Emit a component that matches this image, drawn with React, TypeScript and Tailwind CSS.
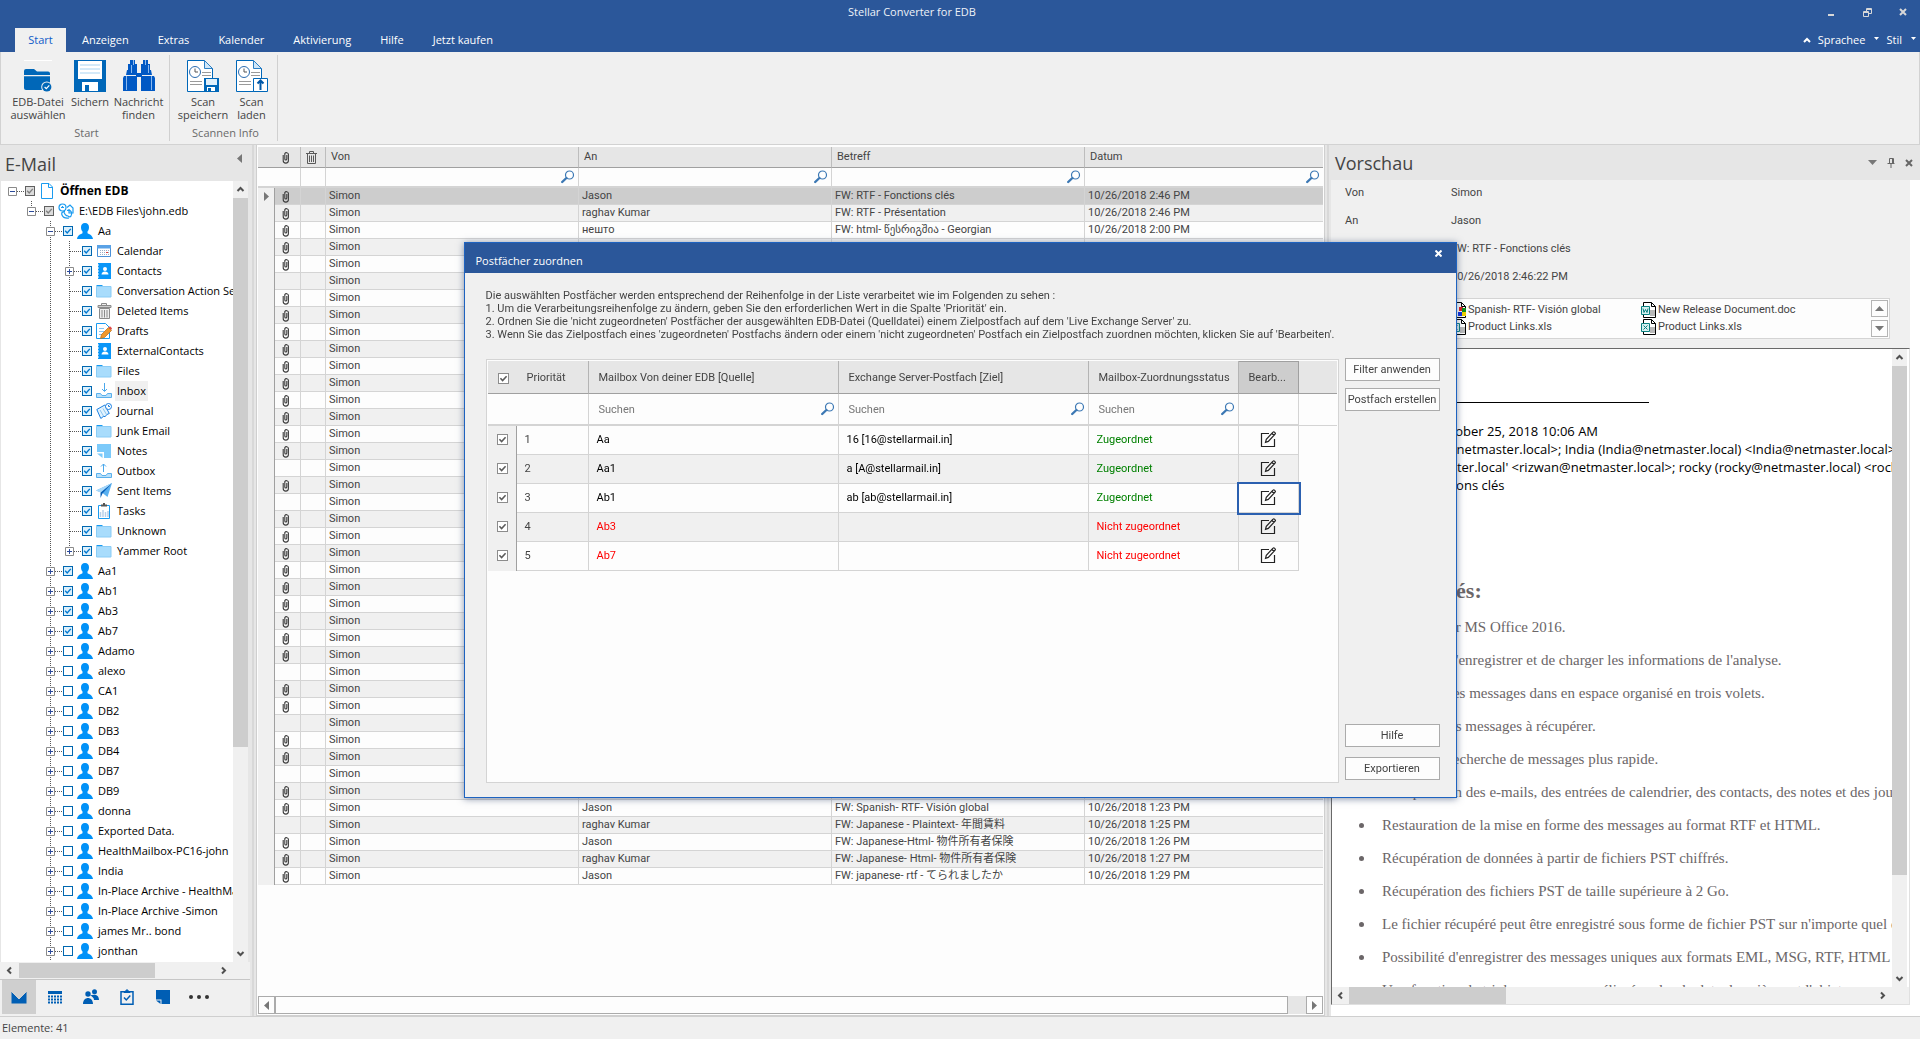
import React from "react";

const UI = "font-['Open_Sans','Noto_Sans',sans-serif]";
const GRID = "font-[Roboto,'DejaVu_Sans','Noto_Sans_CJK_JP',sans-serif]";

/* ---------- small shared pieces ---------- */

function Magnifier() {
  return (
    <svg width="14" height="14" viewBox="0 0 14 14" aria-hidden="true">
      <circle cx="8.5" cy="5" r="4" fill="#fff" stroke="#3c78b4" strokeWidth="1.2" />
      <path d="M5.4 8 1.2 12" stroke="#3c78b4" strokeWidth="2.4" strokeLinecap="round" />
    </svg>
  );
}

function Clip() {
  return (
    <svg className="block" width="8" height="13" viewBox="0 0 8 13" fill="none" stroke="#3c3c3c" strokeWidth="1.1" aria-hidden="true">
      <path d="M1.2 4v5.500a2.600 2.600 0 0 0 5.200 0V3.200A2 2 0 0 0 2.800 2.500V8a1 1 0 0 0 2 0V4" />
    </svg>
  );
}

function TrashSmall() {
  return (
    <svg width="11" height="13" viewBox="0 0 11 13" fill="none" stroke="#5a5a5a" aria-hidden="true">
      <path d="M0 2.5h11M3.5 2V.5h4V2M1.5 3v9.5h8V3M3.5 4.5v6.5M5.5 4.5v6.5M7.5 4.5v6.5" />
    </svg>
  );
}

function Chevron({ dir }: { dir: "up" | "down" | "left" | "right" }) {
  const d = {
    up: "M1.5 6 4.5 3 7.5 6",
    down: "M1.5 3 4.5 6 7.5 3",
    left: "M6 1.5 3 4.5 6 7.5",
    right: "M3 1.5 6 4.5 3 7.5",
  }[dir];
  return (
    <svg width="9" height="9" viewBox="0 0 9 9" fill="none" stroke="#505050" strokeWidth="2" aria-hidden="true">
      <path d={d} />
    </svg>
  );
}

function Triangle({ dir }: { dir: "up" | "down" | "left" | "right" }) {
  const d = { up: "M4.5 2 9 7H0z", down: "M0 2h9L4.5 7z", left: "M2 4.5 7 0v9z", right: "M7 4.5 2 0v9z" }[dir];
  return (
    <svg width="9" height="9" viewBox="0 0 9 9" fill="#777" aria-hidden="true">
      <path d={d} />
    </svg>
  );
}

function Tick({ tone, checked, label }: { tone: "blue" | "grey" | "plain"; checked: boolean; label: string }) {
  const box = {
    blue: checked ? "border-[#0067b0] bg-[#dcf0fc]" : "border-[#0067b0] bg-white",
    grey: "border-[#606060] bg-[#dcdcdc]",
    plain: "border-[#8c8c8c] bg-white",
  }[tone];
  const stroke = { blue: "#0078d0", grey: "#808080", plain: "#5a5a5a" }[tone];
  const size = tone === "plain" ? "size-[11px]" : "size-[10px]";
  return (
    <span className={`relative block shrink-0 ${size}`}>
      <input type="checkbox" defaultChecked={checked} aria-label={label} className={`block size-full appearance-none border ${box}`} />
      {checked && (
        <svg className="pointer-events-none absolute inset-0 size-full" viewBox="0 0 10 10" fill="none" stroke={stroke} strokeWidth="1.4">
          <path d="M2.2 4.8 4.2 6.9 7.8 2.9" />
        </svg>
      )}
    </span>
  );
}

/* ---------- ribbon ---------- */

const FolderBig = () => (
  <svg width="32" height="32" viewBox="0 0 32 32" aria-hidden="true">
    <path d="M2 .5h28" stroke="#fff" />
    <path d="M2 11a2 2 0 0 1 2-2h8l3 2.500h11a2 2 0 0 1 2 2V15H2z" fill="#0067b8" />
    <path d="M2 16.200h26V30H4a2 2 0 0 1-2-2z" fill="#0067b8" />
    <circle cx="24.800" cy="27" r="5.600" fill="#f0f0f0" />
    <circle cx="24.800" cy="27" r="4.600" fill="#0067b8" />
    <path d="m22.600 27 1.700 1.700 3-3.400" stroke="#fff" strokeWidth="1.200" fill="none" />
  </svg>
);
const Floppy = () => (
  <svg width="32" height="32" viewBox="0 0 32 32" aria-hidden="true">
    <path fill="#0067b8" d="M0 0h32v32H0z" />
    <path fill="#fff" d="M4 1h24v18H4z" />
    <path d="M6 5h20M6 9h20M6 13h20" stroke="#a9d4f2" />
    <path fill="#fff" d="M8 22h16v9H8z" />
    <path fill="#0067b8" d="M11 25h4v6h-4z" />
  </svg>
);
const Binoculars = () => (
  <svg width="32" height="32" viewBox="0 0 32 32" aria-hidden="true">
    <g fill="#0058c4">
      <path d="M7 0h5v4h2v9H5V4h2zM20 0h5v4h2v9h-9V4h2z" />
      <path d="M4 10h10v5H3zM18 10h10l1 5H18zM13 13h6v4h-6z" />
      <path d="M1 16h13v15H0V18zM18 16h13l1 2v13H18z" />
    </g>
    <path d="M10.500 0v5M22.500 0v5M8.500 5v8M25.500 5v8M3.500 16v14M28.500 16v14" stroke="#8ab8ee" />
    <path d="M16 0v12M16 18v13" stroke="#f0f0f0" strokeWidth="3" />
  </svg>
);
const ScanDoc = ({ children }: { children: React.ReactNode }) => (
  <svg width="32" height="32" viewBox="0 0 32 32" aria-hidden="true">
    <path d="M.5.5h17l8 8v23H.5z" fill="#fff" stroke="#0067b8" />
    <path d="M17.500.5v8h8z" fill="#cfe6f8" stroke="#2b7fc4" />
    <circle cx="8" cy="12" r="5.500" fill="#fff" stroke="#2b6cb0" />
    <path d="M8 8.500V12h3" fill="none" stroke="#555" />
    <path d="M15 12.500h9M15 15.500h9M3 21.500h12M3 24.500h12" stroke="#9a9a9a" />
    {children}
  </svg>
);
const ScanSave = () => (
  <ScanDoc>
    <path d="M17 18h15v14H17z" fill="#0067b8" />
    <path d="M19 19h11v6H19z" fill="#e0f0fb" />
    <path d="M20 27h8v4h-8z" fill="#fff" />
    <path d="M21 28h3v3h-3z" fill="#0067b8" />
  </ScanDoc>
);
const ScanLoad = () => (
  <ScanDoc>
    <path d="M17.500 18.500h14v13h-14z" fill="#fff" stroke="#0067b8" />
    <path d="M24.500 30v-9M21.500 23.500l3-3 3 3" stroke="#0058a8" strokeWidth="2" fill="none" />
  </ScanDoc>
);

function RibbonButton({ icon, lines, width }: { icon: React.ReactNode; lines: string[]; width: string }) {
  return (
    <button className={`flex flex-col items-center gap-[3px] ${width}`}>
      {icon}
      <span className="h-[26px] whitespace-nowrap text-center text-[11px] leading-[13px] text-[#444]">
        {lines.map((l) => (
          <span key={l} className="block">{l}</span>
        ))}
      </span>
    </button>
  );
}

function Header() {
  const tabs = ["Anzeigen", "Extras", "Kalender", "Aktivierung", "Hilfe", "Jetzt kaufen"];
  return (
    <header className="shrink-0">
      <div className="bg-[#2b579a] text-[11px] text-white">
        <div className="flex h-7 items-center">
          <h1 className="flex-1 pl-3 pb-[3px] text-center text-[#eef2f8]">Stellar Converter for EDB</h1>
          <div className="flex w-[108px] justify-around pb-1 text-[#d8d8d8]">
            <button aria-label="Minimieren">
              <svg width="10" height="10" viewBox="0 0 10 10"><path d="M2 8h6" stroke="currentColor" strokeWidth="2" /></svg>
            </button>
            <button aria-label="Wiederherstellen">
              <svg width="9" height="9" viewBox="0 0 9 9" fill="none" stroke="currentColor"><path d="M.5 3.500h5v5h-5zM.5 4.500h5M3.500 3V.5h5v5H6M3.500 1.500h5" /></svg>
            </button>
            <button aria-label="Schließen">
              <svg width="8" height="8" viewBox="0 0 8 8" stroke="currentColor" strokeWidth="2"><path d="m1 1 6 6M7 1 1 7" /></svg>
            </button>
          </div>
        </div>
        <nav className="flex h-6 pl-[15px]">
          <button className="w-[51px] bg-[#f0f0f0] text-[#0f5cc8]">Start</button>
          {tabs.map((t, i) => (
            <button key={t} className={i === 0 ? "pl-4 pr-[14px]" : "pl-[15px] pr-[14px]"}>{t}</button>
          ))}
          <div className="ml-auto flex items-center gap-[7px] pr-1">
            <svg width="8" height="6" viewBox="0 0 8 6" fill="none" stroke="#fff" strokeWidth="2"><path d="m1 5 3-3 3 3" /></svg>
            <button className="flex gap-[9px]">
              Sprachee
              <svg className="mt-1" width="5" height="4" viewBox="0 0 5 4" fill="#fff"><path d="M0 1h5L2.500 4z" /></svg>
            </button>
            <button className="flex gap-[9px]">
              Stil
              <svg className="mt-1" width="5" height="4" viewBox="0 0 5 4" fill="#fff"><path d="M0 1h5L2.500 4z" /></svg>
            </button>
          </div>
        </nav>
      </div>
      <div className="flex border border-t-0 border-[#d2d2d2] bg-[#f0f0f0] pb-[3px] pt-[3px]">
        <section className="border-r border-[#d0d0d0] pl-[7px] pr-1 pt-[5px]">
          <div className="flex">
            <RibbonButton width="w-[60px]" icon={<FolderBig />} lines={["EDB-Datei", "auswählen"]} />
            <RibbonButton width="w-11" icon={<Floppy />} lines={["Sichern"]} />
            <RibbonButton width="w-[53px]" icon={<Binoculars />} lines={["Nachricht", "finden"]} />
          </div>
          <h2 className="pb-px pt-1 text-center text-[11px] leading-[15px] text-[#6a6a6a]">Start</h2>
        </section>
        <section className="border-r border-[#d0d0d0] pl-[7px] pr-[3px] pt-[5px]">
          <div className="flex">
            <RibbonButton width="w-[52px]" icon={<ScanSave />} lines={["Scan", "speichern"]} />
            <RibbonButton width="w-[45px]" icon={<ScanLoad />} lines={["Scan", "laden"]} />
          </div>
          <h2 className="pb-px pt-1 text-center text-[11px] leading-[15px] text-[#6a6a6a]">Scannen Info</h2>
        </section>
      </div>
    </header>
  );
}

/* ---------- folder tree ---------- */

type IconName = "file" | "db" | "user" | "calendar" | "contacts" | "folder" | "trash" | "draft" | "inbox" | "journal" | "notes" | "outbox" | "sent" | "tasks";

const treeIcons: Record<IconName, React.ReactNode> = {
  file: <path d="M2.500.5h7.500l3.500 3.500v11.500h-11zM9.500.5v4h4" fill="#fff" stroke="#1a9bf0" />,
  db: (
    <g fill="none" stroke="#1a9bf0" strokeWidth="1.200">
      <circle cx="4.500" cy="4.500" r="3.500" />
      <path d="M3 4.500h3M4.500 3v1.500M9 4.500 12 2l3 3v5h-4V6M7 8.500c-2 0-4 1-3 3.500s4 3.500 7 3M9 7.500c3-1 5 1 4.500 4s-2.500 3-4 1M6 8c0 3 2 5 4 5" />
    </g>
  ),
  user: <path d="M8 0c2.600 0 4 1.700 4 4.200 0 1.800-.6 3.300-1.500 4.300v1.700c1.200 1 4.900 1.300 5.500 5.800H0c.6-4.500 4.300-4.800 5.500-5.800V8.500C4.600 7.500 4 6 4 4.200 4 1.700 5.400 0 8 0z" fill="#0091f8" />,
  calendar: (
    <>
      <path d="M1.500 2.500h13v11h-13z" fill="#fff" stroke="#4a90d8" />
      <path d="M1 2h14v3.500H1z" fill="#5aa2e6" />
      <path d="M4 7.500h9M4 9.500h9M4 11.500h9" stroke="#9ab0c8" strokeDasharray="1 1" />
      <path d="M10 9h2v1h-2z" fill="#e04040" />
    </>
  ),
  contacts: (
    <>
      <path d="M2 0h13v16H2z" fill="#0a96f8" />
      <path d="M2 2h1M2 5h1M2 8h1M2 11h1M2 14h1" stroke="#fff" />
      <circle cx="9" cy="6" r="2" fill="#fff" />
      <path d="M5.500 11.500c0-4 7-4 7 0z" fill="#fff" />
    </>
  ),
  folder: (
    <>
      <path d="M.5 3.500V2h5.500l1.500 1.500z" fill="#1a9bf0" />
      <path d="M.5 3.500h14.500v10.500H.5z" fill="#a8dcfc" stroke="#8accf6" />
    </>
  ),
  trash: (
    <g fill="#eee" stroke="#8a8a8a">
      <path d="M3.500 5.500h10v10h-10zM5.500 2V.5h5V2" />
      <path d="M2 2.500h13v2H2z" fill="#ccc" />
      <path d="M6 7v7.500M8.500 7v7.500M11 7v7.500" />
    </g>
  ),
  draft: (
    <>
      <path d="M.5.5h9l4 4v11H.5z" fill="#fff" stroke="#1a9bf0" />
      <path d="M3 5.500h5M3 8.500h5M3 11.500h3" stroke="#8ac4f0" />
      <path d="m4.500 15.500 1-4 7-7 3 3-7 7z" fill="#f0982c" stroke="#b86a14" strokeWidth=".7" />
      <path d="m12.500 4.500 1.500-1.200 2 2-.8 1.700z" fill="#e04848" />
    </>
  ),
  inbox: (
    <>
      <path d="M.5 10.500h4l1.500 2h4l1.500-2h4v4H.5z" fill="#b8e0fa" stroke="#5ab0ec" />
      <path d="M8.500 0v8M6 6l2.500 2.500L11 6" fill="none" stroke="#4aa8ec" />
    </>
  ),
  outbox: (
    <>
      <path d="M.5 10.500h4l1.500 2h4l1.500-2h4v4H.5z" fill="#b8e0fa" stroke="#5ab0ec" />
      <path d="M7.500 9V1M5 3.500 7.500 1 10 3.500" fill="none" stroke="#4aa8ec" />
    </>
  ),
  journal: (
    <g fill="#e2f3fe" stroke="#1a7fe0">
      <path d="m.8 6.500 8-4.500 4.500 8.500-2.500 1-1.500 2-2 0-2.500 2z" />
      <path d="m4 7 3.500 6M7 5.500l3.500 6" stroke="#8ac4f0" />
      <circle cx="12.500" cy="3.500" r="3" fill="#fff" />
      <path d="M12.500 2v1.500H14" fill="none" />
    </g>
  ),
  notes: <path d="M1 1h14v14H8V9H1zM1 10.500h5.500V15z" fill="#7ccafa" />,
  sent: (
    <>
      <path d="M0 7.500 16 0l-4.500 14-5-4z" fill="#5ab0f0" />
      <path d="M16 0 4.500 9.500V15l2-4.500z" fill="#0a5fb8" />
      <path d="M16 0 0 7.500l4.500 2z" fill="#a8d8fa" />
    </>
  ),
  tasks: (
    <>
      <path d="M2.500 2.500h11v13h-11z" fill="#fff" stroke="#1a9bf0" />
      <path d="M5 3.500v-2h2V0h2v1.500h2v2z" fill="#555" />
      <path d="M4.500 9v5M7 7v7M9.500 9v5M12 8v6" stroke="#b8d0ea" strokeWidth="1.500" />
    </>
  ),
};

interface TreeItem {
  label: string;
  level: number;
  icon: IconName;
  tick: "on" | "off" | "mixed";
  open?: boolean;
  leaf?: boolean;
  lines?: number[];
  down?: boolean;
}

const inner = (label: string, icon: IconName, leaf = true, down = true): TreeItem => ({ label, icon, level: 3, tick: "on", leaf, lines: [2], down });
const box = (label: string, tick: "on" | "off" = "off"): TreeItem => ({ label, icon: "user", level: 2, tick, down: true });

const tree: TreeItem[] = [
  { label: "Öffnen EDB", level: 0, icon: "file", tick: "mixed", open: true },
  { label: "E:\\EDB Files\\john.edb", level: 1, icon: "db", tick: "mixed", open: true },
  { label: "Aa", level: 2, icon: "user", tick: "on", open: true, down: true },
  inner("Calendar", "calendar"),
  inner("Contacts", "contacts", false),
  inner("Conversation Action Settings", "folder"),
  inner("Deleted Items", "trash"),
  inner("Drafts", "draft"),
  inner("ExternalContacts", "contacts"),
  inner("Files", "folder"),
  inner("Inbox", "inbox"),
  inner("Journal", "journal"),
  inner("Junk Email", "folder"),
  inner("Notes", "notes"),
  inner("Outbox", "outbox"),
  inner("Sent Items", "sent"),
  inner("Tasks", "tasks"),
  inner("Unknown", "folder"),
  inner("Yammer Root", "folder", false, false),
  box("Aa1", "on"),
  box("Ab1", "on"),
  box("Ab3", "on"),
  box("Ab7", "on"),
  ...["Adamo", "alexo", "CA1", "DB2", "DB3", "DB4", "DB7", "DB9", "donna", "Exported Data.", "HealthMailbox-PC16-john", "India", "In-Place Archive - HealthMailbox", "In-Place Archive -Simon", "james Mr.. bond", "jonthan"].map((l) => box(l)),
];

function Joint({ item }: { item: TreeItem }) {
  return (
    <svg className="block" width="22" height="20" viewBox="0 0 22 20" aria-hidden="true">
      <g stroke="#555" strokeDasharray="1 1">
        {item.level > 0 && <path d="M9.500 0v10" />}
        {item.down && <path d="M9.500 10v10" />}
        <path d="M10 10.500h11" />
      </g>
      {!item.leaf && (
        <g fill="#fff" stroke="#8a8a8a">
          <path d="M5.500 6.500h8v8h-8z" />
          <path d={item.open ? "M7 10.500h5" : "M7 10.500h5M9.500 8v5"} stroke="#2b4a9a" />
        </g>
      )}
    </svg>
  );
}

function TreeRow({ item }: { item: TreeItem }) {
  return (
    <li className="flex h-5 items-center whitespace-nowrap">
      {Array.from({ length: item.level }, (_, i) => (
        <svg key={i} className="shrink-0" width="19" height="20" viewBox="0 0 19 20" aria-hidden="true">
          {item.lines?.includes(i) && <path d="M9.500 0v20" stroke="#555" strokeDasharray="1 1" />}
        </svg>
      ))}
      {item.leaf ? (
        <span className="shrink-0"><Joint item={item} /></span>
      ) : (
        <button className="shrink-0" aria-label={`${item.label} ${item.open ? "zuklappen" : "aufklappen"}`}><Joint item={item} /></button>
      )}
      <Tick tone={item.tick === "mixed" ? "grey" : "blue"} checked={item.tick !== "off"} label={item.label} />
      <svg className="ml-1 shrink-0" width="16" height="16" viewBox="0 0 16 16" aria-hidden="true">{treeIcons[item.icon]}</svg>
      <span className={`ml-[3px] px-0.5 text-black ${item.level === 0 ? "text-[12px] font-bold" : "text-[11px]"} ${item.label === "Inbox" ? "bg-[#f0f0f0] leading-5" : ""}`}>{item.label}</span>
    </li>
  );
}

function NavBar() {
  const items: [string, React.ReactNode][] = [
    ["E-Mail", <path key="m" d="M0 2h16v13H0zM0 2l8 8 8-8" fill="#005eb4" stroke="#cfcfcf" strokeWidth="1" />],
    ["Kalender", <g key="k"><path d="M1 2h14v3H1z" fill="#005eb4" /><path d="M1 7.500h14M1 10.500h14M1 13.500h14" stroke="#005eb4" strokeWidth="2" strokeDasharray="2 1" /></g>],
    ["Personen", <g key="p" fill="#005eb4"><circle cx="11.500" cy="2.700" r="2.500" /><circle cx="5" cy="5" r="2.700" /><path d="M7 6.500c5-2 9-.5 9 4.500h-5c0-2-1.500-3.500-4-4.500zM0 15c0-8 10-8 10 0z" /></g>],
    ["Aufgaben", <g key="a" fill="none" stroke="#005eb4" strokeWidth="1.500"><path d="M2 2.800h12v12.400H2z" /><path d="m5 8.500 2.300 2.500 4-4.500" /><path d="M5 3.500h6L8 .5z" fill="#005eb4" strokeWidth="1" /></g>],
    ["Notizen", <path key="n" d="M1 1h14v14H6.500v-4.500H1zM1 11.500h4.500V15z" fill="#005eb4" />],
  ];
  return (
    <nav className="flex h-[37px] items-center border-t border-[#c6c6c6] bg-[#f0f0f0] px-0.5 pb-0.5">
      {items.map(([label, icon], i) => (
        <button key={label} aria-label={label} className={`grid h-[34px] place-items-center ${i === 0 ? "mr-px w-[34px] bg-[#cfcfcf]" : "w-9"}`}>
          <svg width="16" height="16" viewBox="0 0 16 16" aria-hidden="true">{icon}</svg>
        </button>
      ))}
      <button aria-label="Mehr" className="grid h-[34px] w-9 place-items-center">
        <svg width="20" height="4" viewBox="0 0 20 4" fill="#333"><circle cx="2" cy="2" r="2" /><circle cx="10" cy="2" r="2" /><circle cx="18" cy="2" r="2" /></svg>
      </button>
    </nav>
  );
}

function Sidebar() {
  return (
    <aside className="flex w-[250px] shrink-0 flex-col bg-[#e6e6e6]">
      <div className="flex h-9 shrink-0 justify-between pl-[5px] pr-[6px]">
        <h2 className="pt-[5px] text-[18px] leading-7 text-[#444]">E-Mail</h2>
        <button aria-label="Leiste einklappen" className="self-start pt-[9px]"><Triangle dir="left" /></button>
      </div>
      <div className="flex min-h-0 flex-1 pl-px pr-[2px]">
        <ul className="min-w-0 flex-1 overflow-hidden bg-white pl-[2px]">
          {tree.map((t) => <TreeRow key={t.label} item={t} />)}
        </ul>
        <div className="flex w-[15px] flex-col items-center bg-[#f0f0f0]">
          <button aria-label="Nach oben" className="py-1"><Chevron dir="up" /></button>
          <div className="h-[549px] w-full bg-[#cdcdcd]" />
          <button aria-label="Nach unten" className="mt-auto py-1"><Chevron dir="down" /></button>
        </div>
      </div>
      <div className="flex h-[17px] items-center bg-[#f0f0f0] pr-[22px]">
        <button aria-label="Nach links" className="px-[5px]"><Chevron dir="left" /></button>
        <div className="h-[15px] w-[136px] bg-[#cdcdcd]" />
        <button aria-label="Nach rechts" className="ml-auto"><Chevron dir="right" /></button>
      </div>
      <NavBar />
    </aside>
  );
}

/* ---------- message list ---------- */

const noClip = [5, 16, 18, 28, 31, 34, 37];
const details: Record<number, [string, string, string]> = {
  0: ["Jason", "FW: RTF - Fonctions clés", "10/26/2018 2:46 PM"],
  1: ["raghav Kumar", "FW: RTF - Présentation", "10/26/2018 2:46 PM"],
  2: ["нешто", "FW: html- წესრიგშია - Georgian", "10/26/2018 2:00 PM"],
  36: ["Jason", "FW: Spanish- RTF- Visión global", "10/26/2018 1:23 PM"],
  37: ["raghav Kumar", "FW: Japanese - Plaintext- 年間賃料", "10/26/2018 1:25 PM"],
  38: ["Jason", "FW: Japanese-Html- 物件所有者保険", "10/26/2018 1:26 PM"],
  39: ["raghav Kumar", "FW: Japanese- Html- 物件所有者保険", "10/26/2018 1:27 PM"],
  40: ["Jason", "FW: japanese- rtf -  てられましたか", "10/26/2018 1:29 PM"],
};

function MessageList() {
  const cell = "h-[17px] overflow-hidden whitespace-nowrap border-b border-r border-[#d4d4d4] py-0 pr-0 leading-4";
  const head = "border-b border-r border-b-[#a0a0a0] border-r-[#bdbdbd] py-0 pr-0 text-left font-normal";
  return (
    <main className={`flex min-w-0 flex-1 flex-col border-x border-b border-[#cfcfcf] bg-[#fdfdfd] p-px pt-0.5 text-[11px] text-[#444] ${GRID}`}>
      <div className="min-h-0 flex-1 overflow-hidden">
        <table className="w-full table-fixed border-separate border-spacing-0">
          <colgroup>
            <col className="w-[17px]" /><col className="w-[26px]" /><col className="w-[25px]" />
            <col /><col /><col /><col className="w-[238px]" />
          </colgroup>
          <thead>
            <tr className="h-[21px] bg-[#e6e6e6]">
              <th className={`${head} border-r-0 pl-0`} />
              <th className={`${head} pl-[7px]`}><Clip /></th>
              <th className={`${head} pl-[5px]`}><TrashSmall /></th>
              <th className={`${head} pl-[5px]`}>Von</th><th className={`${head} pl-[5px]`}>An</th><th className={`${head} pl-[5px]`}>Betreff</th><th className={`${head} border-r-0 pl-[5px]`}>Datum</th>
            </tr>
            <tr className="h-5">
              <td className="border-b-2 border-[#d4d4d4] p-0" />
              <td className="border-b-2 border-r border-[#d4d4d4] p-0" />
              <td className="border-b-2 border-r border-[#d4d4d4] p-0" />
              {["Von", "An", "Betreff", "Datum"].map((c) => (
                <td key={c} className={`border-b-2 border-[#d4d4d4] p-0 ${c === "Datum" ? "" : "border-r"}`}>
                  <div className="flex items-center pr-[3px]">
                    <input aria-label={`${c} filtern`} className="h-4 min-w-0 flex-1 pl-[5px] outline-none" />
                    <Magnifier />
                  </div>
                </td>
              ))}
            </tr>
          </thead>
          <tbody>
            {Array.from({ length: 41 }, (_, i) => {
              const d = details[i] ?? ["", "", ""];
              return (
                <tr key={i} className={i === 0 ? "bg-[#cdcdcd]" : i % 2 ? "bg-[#f0f0f0]" : ""}>
                  <td className="border-r border-[#a0a0a0] bg-[#f0f0f0] p-0">
                    {i === 0 && <span className="block pl-[4px]"><Triangle dir="right" /></span>}
                  </td>
                  <td className={`${cell} pl-[7px]`}>{!noClip.includes(i) && <Clip />}</td>
                  <td className={`${cell} pl-[3px]`} />
                  <td className={`${cell} pl-[3px]`}>Simon</td>
                  <td className={`${cell} pl-[3px]`}>{d[0]}</td>
                  <td className={`${cell} pl-[3px]`}>{d[1]}</td>
                  <td className={`${cell} border-r-0 pl-[3px]`}>{d[2]}</td>
                </tr>
              );
            })}
          </tbody>
        </table>
      </div>
      <div className="flex h-[18px] shrink-0 bg-[#e6e6e6]">
        <button aria-label="Nach links" className="grid w-[17px] place-items-center border border-[#ababab] bg-[#fdfdfd]"><Triangle dir="left" /></button>
        <div className="mr-[18px] flex-1 border border-[#ababab] bg-[#fdfdfd]" />
        <button aria-label="Nach rechts" className="grid w-[17px] place-items-center border border-[#ababab] bg-[#fdfdfd]"><Triangle dir="right" /></button>
      </div>
    </main>
  );
}

/* ---------- preview ---------- */

function DocIcon({ letter, paint }: { letter?: string; paint?: boolean }) {
  return (
    <svg className="shrink-0" width="15" height="16" viewBox="0 0 15 16" aria-hidden="true">
      <path d="M2.500.5h8l4 4v11h-12z" fill="#fff" stroke="#000" />
      <path d="M10.500.5v4h4" fill="none" stroke="#000" />
      {paint ? (
        <>
          <path d="M8 5h4v4H8z" fill="#e02020" /><path d="M11 6h4v4h-4z" fill="#109020" /><path d="M7 10h4v4H7z" fill="#1030e0" /><path d="M11 10h4v4h-4z" fill="#f0d000" />
        </>
      ) : (
        <>
          <path d="M9 8h5v6H9z" fill="#b8b8b8" />
          <path d="M.5 4.500h8v8h-8z" fill="#d8f0f0" stroke="#0a8080" />
          <path d={letter === "w" ? "M2 6.500l1 4 1.500-3 1.500 3 1-4" : "M2.500 6.500l4 4M6.500 6.500l-4 4"} fill="none" stroke="#0a8080" />
        </>
      )}
    </svg>
  );
}

function Preview() {
  const fields: [string, string][] = [
    ["Von", "Simon"],
    ["An", "Jason"],
    ["Betreff", "FW: RTF - Fonctions clés"],
    ["Datum", "10/26/2018 2:46:22 PM"],
  ];
  const bullets = [
    "Support pour MS Office 2016.",
    "Possibilité d'enregistrer et de charger les informations de l'analyse.",
    "Affichage des messages dans en espace organisé en trois volets.",
    "Sélection des messages à récupérer.",
    "Moteur de recherche de messages plus rapide.",
    "Récupération des e-mails, des entrées de calendrier, des contacts, des notes et des journaux.",
    "Restauration de la mise en forme des messages au format RTF et HTML.",
    "Récupération de données à partir de fichiers PST chiffrés.",
    "Récupération des fichiers PST de taille supérieure à 2 Go.",
    "Le fichier récupéré peut être enregistré sous forme de fichier PST sur n'importe quel disque.",
    "Possibilité d'enregistrer des messages uniques aux formats EML, MSG, RTF, HTML et PDF.",
    "Une fonction de tri des messages améliorée selon la date, les pièces et l'objet.",
  ];
  return (
    <aside className="flex w-[589px] shrink-0 flex-col bg-white">
      <div className="flex h-[35px] shrink-0 items-center bg-[#e6e6e6] pl-1 pr-[7px]">
        <h2 className="flex-1 text-[18px] leading-7 text-[#444]">Vorschau</h2>
        <div className="flex items-center gap-[10px] text-[#666]">
          <button aria-label="Menü"><Triangle dir="down" /></button>
          <button aria-label="Anheften">
            <svg width="8" height="10" viewBox="0 0 8 10" fill="none" stroke="currentColor"><path d="M2.500 5.500v-5h4v5M5.500.5v5M.5 5.500h7M4 6v4" /></svg>
          </button>
          <button aria-label="Schließen">
            <svg width="8" height="8" viewBox="0 0 8 8" stroke="currentColor" strokeWidth="2"><path d="m1 1 6 6M7 1 1 7" /></svg>
          </button>
        </div>
      </div>
      <div className={`mr-[10px] shrink-0 bg-[#f0f0f0] pb-[9px] text-[11px] text-[#444] ${GRID}`}>
        <dl className="pl-[14px]">
          {fields.map(([k, v], i) => (
            <div key={k} className={`flex items-center ${i === 0 ? "h-[27px]" : "h-7"}`}>
              <dt className="w-[106px]">{k}</dt>
              <dd>{v}</dd>
            </div>
          ))}
        </dl>
        <div className="ml-[117px] mr-[20px] mt-[7px] flex h-[41px] justify-between border border-[#d4d4d4] bg-[#fdfdfd] pl-0.5 pr-px">
          <ul className="grid flex-1 grid-cols-[190px_1fr] content-center gap-y-px">
            {["Spanish- RTF- Visión global", "New Release Document.doc", "Product Links.xls", "Product Links.xls"].map((n, i) => (
              <li key={i}>
                <a href="#attachment" className="flex h-4 items-center gap-0.5">
                  <DocIcon paint={i === 0} letter={i === 1 ? "w" : "x"} />
                  {n}
                </a>
              </li>
            ))}
          </ul>
          <div className="flex flex-col justify-center gap-[3px]">
            <button aria-label="Nach oben" className="grid h-[17px] w-[17px] place-items-center border border-[#b4b4b4]"><Triangle dir="up" /></button>
            <button aria-label="Nach unten" className="grid h-[17px] w-[17px] place-items-center border border-[#b4b4b4]"><Triangle dir="down" /></button>
          </div>
        </div>
      </div>
      <div className="mb-[11px] mr-[10px] flex min-h-0 flex-1 flex-col border border-b-[#e0e0e0] border-l-[#696969] border-r-[#e0e0e0] border-t-[#696969]">
        <div className="flex min-h-0 flex-1">
          <article className="min-w-0 flex-1 overflow-hidden whitespace-nowrap pl-[3px]">
            <hr className="mb-[19px] mt-[53px] w-[314px] border-black" />
            <div className="text-[13px] leading-[18px] text-black">
              <p><b>Sent:</b> Thursday, October 25, 2018 10:06 AM</p>
              <p><b>To:</b> Simon &lt;Simon@netmaster.local&gt;; India (India@netmaster.local) &lt;India@netmaster.local&gt;</p>
              <p><b>Cc:</b> 'rizwan@netmaster.local' &lt;rizwan@netmaster.local&gt;; rocky (rocky@netmaster.local) &lt;rocky@netmaster.local&gt;</p>
              <p><b>Subject:</b> RTF- Fonctions clés</p>
            </div>
            <div className="font-['Liberation_Serif',serif] text-[#6b6668]">
              <h3 className="mb-1 ml-2 mt-20 text-[22px] font-bold leading-[33px]">Fonctions clés:</h3>
              <ul className="text-[15px] leading-[33px]">
                {bullets.map((b) => (
                  <li key={b} className="flex items-center">
                    <span className="ml-6 mr-[18px] size-[5px] shrink-0 rounded-full bg-[#6b6668]" />
                    {b}
                  </li>
                ))}
              </ul>
            </div>
          </article>
          <div className="mr-0.5 flex w-[15px] flex-col items-center bg-[#f0f0f0]">
            <button aria-label="Nach oben" className="py-1"><Chevron dir="up" /></button>
            <div className="h-[509px] w-full bg-[#cdcdcd]" />
            <button aria-label="Nach unten" className="mt-auto py-1"><Chevron dir="down" /></button>
          </div>
        </div>
        <div className="flex h-[17px] shrink-0 items-center bg-[#f0f0f0] pr-[22px]">
          <button aria-label="Nach links" className="px-1"><Chevron dir="left" /></button>
          <div className="h-full w-[157px] bg-[#cdcdcd]" />
          <button aria-label="Nach rechts" className="ml-auto"><Chevron dir="right" /></button>
        </div>
      </div>
    </aside>
  );
}

/* ---------- dialog ---------- */

function EditIcon() {
  return (
    <svg width="17" height="17" viewBox="0 0 17 17" fill="none" stroke="#222" strokeWidth="1.200" aria-hidden="true">
      <path d="M9 2.500H1.500v13h13V8" />
      <path d="m5.500 11.300.8-3L13 1.200a1 1 0 0 1 1.500 0l.6.6a1 1 0 0 1 0 1.400l-6.800 7.200zM12 2.500l2 2" />
    </svg>
  );
}

const mailboxes: [string, string, boolean][] = [
  ["Aa", "16 [16@stellarmail.in]", true],
  ["Aa1", "a [A@stellarmail.in]", true],
  ["Ab1", "ab [ab@stellarmail.in]", true],
  ["Ab3", "", false],
  ["Ab7", "", false],
];

function MapDialog() {
  const head = "border-b border-r border-b-[#a0a0a0] border-r-[#b4b4b4] pb-0 pr-0 pt-0.5 pl-[10px] text-left font-normal whitespace-nowrap";
  const cell = "border-b border-r border-[#d4d4d4] pb-0 pr-0 pt-px pl-2 whitespace-nowrap";
  const filter = "border-b-2 border-r border-[#d4d4d4] p-0";
  const btn = "h-[23px] border border-[#ababab] bg-[#fdfdfd] pt-px text-center whitespace-nowrap";
  return (
    <div className="fixed inset-0 flex items-center justify-center pt-px">
      <section role="dialog" aria-labelledby="dlg-title" className="flex h-[556px] w-[993px] flex-col border border-[#1e63c0] bg-[#f0f0f0] shadow-[0_1px_7px_rgba(40,60,100,0.55)]">
        <div className="flex h-[30px] shrink-0 justify-between bg-[#2b579a] pl-[11px] pr-[14px] text-white">
          <h2 id="dlg-title" className="pt-2.5 text-[11px] leading-4">Postfächer zuordnen</h2>
          <button aria-label="Schließen" className="self-start pt-[7px]">
            <svg width="7" height="7" viewBox="0 0 7 7" stroke="#fff" strokeWidth="2"><path d="m.5.5 6 6M6.500.5l-6 6" /></svg>
          </button>
        </div>
        <div className={`flex min-h-0 flex-1 flex-col pb-[14px] pl-[21px] pr-4 pt-4 text-[11px] text-[#444] ${GRID}`}>
          <div className="whitespace-nowrap leading-[13px]">
            <p>Die auswählten Postfächer werden entsprechend der Reihenfolge in der Liste verarbeitet wie im Folgenden zu sehen :</p>
            <p>1. Um die Verarbeitungsreihenfolge zu ändern, geben Sie den erforderlichen Wert in die Spalte 'Priorität' ein.</p>
            <p>2. Ordnen Sie die 'nicht zugeordneten' Postfächer der ausgewählten EDB-Datei (Quelldatei) einem Zielpostfach auf dem 'Live Exchange Server' zu.</p>
            <p>3. Wenn Sie das Zielpostfach eines 'zugeordneten' Postfachs ändern oder einem 'nicht zugeordneten' Postfach ein Zielpostfach zuordnen möchten, klicken Sie auf 'Bearbeiten'.</p>
          </div>
          <div className="mt-[17px] flex min-h-0 flex-1 gap-1.5">
            <div className="mt-px min-w-0 flex-1 border border-[#d4d4d4] bg-[#fdfdfd] p-px">
              <table className="w-full table-fixed border-separate border-spacing-0">
                <colgroup>
                  <col className="w-[29px]" /><col className="w-[72px]" /><col className="w-[250px]" /><col className="w-[250px]" /><col className="w-[150px]" /><col className="w-[60px]" /><col />
                </colgroup>
                <thead>
                  <tr className="h-[33px] bg-[#e6e6e6]">
                    <th className={`${head} border-r-0`}><Tick tone="plain" checked label="Alle auswählen" /></th>
                    <th className={head}>Priorität</th>
                    <th className={head}>Mailbox Von deiner EDB [Quelle]</th>
                    <th className={head}>Exchange Server-Postfach [Ziel]</th>
                    <th className={head}>Mailbox-Zuordnungsstatus</th>
                    <th className="border border-l-0 border-[#a0a0a0] bg-[#cdcdcd] pb-0 pl-[10px] pr-0 pt-0.5 text-left font-normal">Bearb...</th>
                    <th className={`${head} border-r-0`} />
                  </tr>
                  <tr className="h-8">
                    <td className="border-b-2 border-[#d4d4d4]" />
                    <td className={filter} />
                    {["Mailbox", "Exchange", "Status"].map((f) => (
                      <td key={f} className={filter}>
                        <div className="flex items-center pr-[3px]">
                          <input aria-label={`${f} suchen`} placeholder="Suchen" className="h-7 min-w-0 flex-1 pl-[10px] outline-none placeholder:text-[#777]" />
                          <Magnifier />
                        </div>
                      </td>
                    ))}
                    <td className={filter} />
                    <td className="border-b border-[#d4d4d4]" />
                  </tr>
                </thead>
                <tbody>
                  {mailboxes.map(([name, target, ok], i) => (
                    <tr key={name} className="h-[29px]">
                      <td className="border-r border-[#a0a0a0] bg-[#f0f0f0] pb-0.5 pl-[9px] pr-0 pt-0"><Tick tone="plain" checked label={name} /></td>
                      <td className={`${cell} ${i % 2 ? "bg-[#f0f0f0]" : ""}`}>{i + 1}</td>
                      <td className={`${cell} ${i % 2 ? "bg-[#f0f0f0]" : ""} ${ok ? "text-black" : "text-[#f00]"}`}>{name}</td>
                      <td className={`${cell} ${i % 2 ? "bg-[#f0f0f0]" : ""} text-black`}>{target}</td>
                      <td className={`${cell} ${i % 2 ? "bg-[#f0f0f0]" : ""} ${ok ? "text-[#008000]" : "text-[#f00]"}`}>{ok ? "Zugeordnet" : "Nicht zugeordnet"}</td>
                      <td className={`border-b border-r border-[#d4d4d4] px-0 pb-0.5 pt-0 ${i % 2 ? "bg-[#f0f0f0]" : ""} ${i === 2 ? "outline-2 outline-[#2b60b0]" : ""}`}>
                        <button aria-label={`${name} bearbeiten`} className="grid w-full place-items-center"><EditIcon /></button>
                      </td>
                      <td />
                    </tr>
                  ))}
                </tbody>
              </table>
            </div>
            <div className="flex w-[95px] flex-col pb-[3px]">
              <button className={btn}>Filter anwenden</button>
              <button className={`${btn} mt-[7px]`}>Postfach erstellen</button>
              <button className={`${btn} mt-auto`}>Hilfe</button>
              <button className={`${btn} mt-[10px]`}>Exportieren</button>
            </div>
          </div>
        </div>
      </section>
    </div>
  );
}

export default function App() {
  return (
    <div className={`flex h-screen flex-col overflow-hidden bg-[#f0f0f0] ${UI}`}>
      <Header />
      <div className="flex min-h-0 flex-1">
        <Sidebar />
        <div className="w-1.5 shrink-0 border-x-2 border-[#e6e6e6] bg-[#d8d8d8]" />
        <MessageList />
        <div className="w-1.5 shrink-0 border-x-2 border-[#e6e6e6] bg-[#d8d8d8]" />
        <Preview />
      </div>
      <footer className="h-[23px] shrink-0 border-t border-[#cfcfcf] pl-[2px] text-[11px] leading-[22px] text-[#444]">Elemente: 41</footer>
      <MapDialog />
    </div>
  );
}
